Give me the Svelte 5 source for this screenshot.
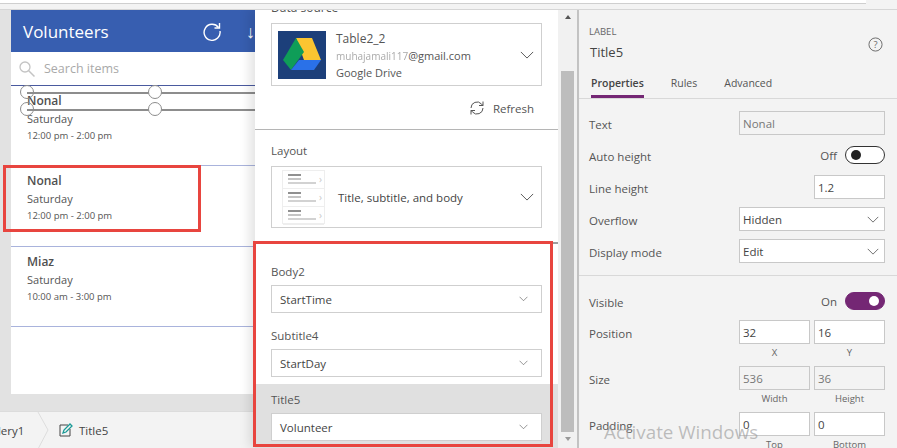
<script>
  const items = [
    { title: 'Nonal', day: 'Saturday', time: '12:00 pm - 2:00 pm' },
    { title: 'Nonal', day: 'Saturday', time: '12:00 pm - 2:00 pm' },
    { title: 'Miaz', day: 'Saturday', time: '10:00 am - 3:00 pm' }
  ];
  const fields = [
    { label: 'Body2', value: 'StartTime' },
    { label: 'Subtitle4', value: 'StartDay' },
    { label: 'Title5', value: 'Volunteer', active: true }
  ];
</script>

{#snippet chevron(w)}
  <svg class="chev" width={w} height={w / 2 + 1} viewBox="0 0 16 9"><path d="M1 1l7 7 7-7" fill="none" stroke="#555" stroke-width="1.1"/></svg>
{/snippet}

<div class="screen">
  <div class="topbar"><div class="topbar-box"></div></div>
  <div class="main">
    <div class="left">
      <div class="canvas">
        <div class="app">
          <div class="app-header">
            <span class="app-title">Volunteers</span>
            <svg class="reload" width="20" height="20" viewBox="0 0 20 20"><path d="M16.5 6.5A8 8 0 1 0 18 10" fill="none" stroke="#fff" stroke-width="1.4"/><path d="M17.5 2v5h-5" fill="none" stroke="#fff" stroke-width="1.4"/></svg>
            <span class="sort">↓</span>
          </div>
          <div class="search">
            <svg width="18" height="18" viewBox="0 0 18 18"><circle cx="7" cy="7" r="5" fill="none" stroke="#c4c4c4" stroke-width="1.3"/><path d="M10.5 10.5l6 6" stroke="#c4c4c4" stroke-width="1.5"/></svg>
            <span>Search items</span>
          </div>
          <div class="gallery">
            {#each items as item}
              <div class="item">
                <div class="item-title">{item.title}</div>
                <div class="item-day">{item.day}</div>
                <div class="item-time">{item.time}</div>
              </div>
            {/each}
          </div>
          <div class="selector">
            <i class="rail r1"></i><i class="rail r2"></i>
            <i class="knob k1"></i><i class="knob k2"></i><i class="knob k3"></i><i class="knob k4"></i>
          </div>
          <div class="redbox small"></div>
        </div>
      </div>
      <div class="crumbs">
        <span class="crumb-a">llery1</span>
        <svg class="sep" width="12" height="37" viewBox="0 0 12 37"><path d="M1 0l10 18L1 37" fill="none" stroke="#ddd"/></svg>
        <svg class="pen" width="14" height="14" viewBox="0 0 14 14"><path d="M9 2H1v11h10V6" fill="none" stroke="#444"/><path d="M4 10l1-3 6-6 2 2-6 6z" fill="none" stroke="#1a9a96" stroke-width="1.3"/></svg>
        <span class="crumb-b">Title5</span>
      </div>
    </div>

    <div class="mid">
      <div class="mid-body">
        <div class="source-section">
          <div class="cut-label"><span>Data source</span></div>
          <div class="box source">
            <svg class="drive" width="48" height="48" viewBox="0 0 48 48">
              <rect width="48" height="48" fill="#1c3f7a"/>
              <path d="M18 7h16l9 22H26z" fill="#fbc531"/>
              <path d="M18 7l8 14-13 18-8-10z" fill="#0f9d58"/>
              <path d="M21 29h22l-7 10H13z" fill="#2a71e8"/>
            </svg>
            <div class="source-text">
              <div class="s-name">Table2_2</div>
              <div class="s-mail"><span class="blurred">muhajamali117</span>@gmail.com</div>
              <div class="s-kind">Google Drive</div>
            </div>
            {@render chevron(14)}
          </div>
          <div class="refresh">
            <svg width="16" height="16" viewBox="0 0 16 16"><path d="M2 8a6 6 0 0 1 10.5-4L14 5.500M14 8a6 6 0 0 1-10.500 4L2 10.500" fill="none" stroke="#555"/><path d="M14 1.500v4h-4M2 14.500v-4h4" fill="none" stroke="#555"/></svg>
            <span>Refresh</span>
          </div>
        </div>
        <div class="layout-section">
          <div class="f-label">Layout</div>
          <div class="box layout">
            <div class="thumb">
              {#each [0, 1, 2] as _}
                <div class="thumb-row"><div class="tl"><i class="t1"></i><i class="t2"></i><i class="t3"></i></div><b>›</b></div>
              {/each}
            </div>
            <span class="layout-name">Title, subtitle, and body</span>
            {@render chevron(14)}
          </div>
        </div>
        <div class="fields">
          {#each fields as f}
            <div class="field" class:active={f.active}>
              <div class="f-label">{f.label}</div>
              <div class="select-box"><span>{f.value}</span>{@render chevron(9)}</div>
            </div>
          {/each}
        </div>
        <div class="redbox big"></div>
      </div>
      <div class="scrollbar">
        <div class="arrow up"></div>
        <div class="track"><div class="thumb-bar"></div></div>
        <div class="arrow down"></div>
      </div>
    </div>

    <div class="right">
      <div class="head">
        <div>
          <div class="kind">LABEL</div>
          <div class="ctl-name">Title5</div>
        </div>
        <svg class="help" width="15" height="15" viewBox="0 0 16 16"><circle cx="8" cy="8" r="7" fill="none" stroke="#666"/><text x="8" y="11.500" text-anchor="middle" font-size="10" fill="#666" font-family="Open Sans">?</text></svg>
      </div>
      <div class="tabs">
        <span class="tab on">Properties</span><span class="tab">Rules</span><span class="tab">Advanced</span>
      </div>
      <div class="group g1">
        <div class="row"><label>Text</label><div class="inp wide off">Nonal</div></div>
        <div class="row"><label>Auto height</label><div class="toggle-wrap"><span>Off</span><span class="toggle"></span></div></div>
        <div class="row"><label>Line height</label><div class="inp">1.2</div></div>
        <div class="row"><label>Overflow</label><div class="inp wide"><span>Hidden</span>{@render chevron(12)}</div></div>
        <div class="row"><label>Display mode</label><div class="inp wide"><span>Edit</span>{@render chevron(12)}</div></div>
      </div>
      <div class="group g2">
        <div class="row vis"><label>Visible</label><div class="toggle-wrap"><span>On</span><span class="toggle onn"></span></div></div>
        <div class="pair"><label>Position</label>
          <div class="cell"><div class="inp">32</div><small>X</small></div>
          <div class="cell"><div class="inp">16</div><small>Y</small></div>
        </div>
        <div class="pair"><label>Size</label>
          <div class="cell"><div class="inp off">536</div><small>Width</small></div>
          <div class="cell"><div class="inp off">36</div><small>Height</small></div>
        </div>
        <div class="pair"><label>Padding</label>
          <div class="cell"><div class="inp">0</div><small>Top</small></div>
          <div class="cell"><div class="inp">0</div><small>Bottom</small></div>
        </div>
      </div>
      <div class="activate">Activate Windows</div>
    </div>
  </div>
</div>

<style>
  :global(body) { margin: 0; }
  .screen {
    position: relative;
    width: 897px;
    height: 448px;
    overflow: hidden;
    display: flex;
    flex-direction: column;
    font-family: "Open Sans", "Noto Sans", sans-serif;
    color: #444;
    background: #f3f3f3;
  }
  .topbar {
    height: 10px;
    flex-shrink: 0;
    box-sizing: border-box;
    border-bottom: 1px solid #d6d6d6;
    background: #f3f3f3;
    position: relative;
    z-index: 4;
    margin-bottom: -1px;
  }
  .topbar-box {
    height: 3px;
    width: 866px;
    background: #fff;
    border-bottom: 1px solid #cfcfcf;
  }
  .main { flex: 1; display: flex; min-height: 0; }

  .left { width: 255px; flex-shrink: 0; display: flex; flex-direction: column; }
  .canvas {
    flex: 1;
    background: #e2e2e2;
    padding: 1px 0 17px 11px;
    min-height: 0;
    display: flex;
  }
  .app { flex: 1; background: #fff; position: relative; display: flex; flex-direction: column; }
  .app-header {
    height: 42px;
    background: #375eb0;
    color: #fff;
    display: flex;
    align-items: center;
    padding-left: 12px;
    flex-shrink: 0;
    overflow: hidden;
  }
  .app-title { font-size: 17px; width: 179px; }
  .sort { margin-left: 24px; font-size: 18px; }
  .search {
    height: 33px;
    display: flex;
    align-items: center;
    padding: 2px 0 0 7px;
    box-sizing: content-box;
    margin-top: -2px;
    gap: 8px;
    font-size: 12.5px;
    color: #a9a9a9;
    border-bottom: 1px solid #4a5a9f;
    flex-shrink: 0;
  }
  .item {
    height: 80px;
    box-sizing: border-box;
    padding: 6px 0 0 16px;
    border-bottom: 1px solid #a9b3dc;
    font-size: 10.5px;
    line-height: 17px;
  }
  .item:nth-child(2) { height: 81px; }
  .item-title { font-size: 12px; font-weight: 600; color: #505050; height: 18px; }
  .item-day { font-size: 11px; color: #555; }
  .item-time { font-size: 9.5px; color: #555; }
  .selector { position: absolute; left: 5px; top: 75px; width: 240px; height: 28px; }
  .rail { position: absolute; left: 11px; right: 0; height: 2px; background: #8d8d8d; }
  .r1 { top: 7px; }
  .r2 { top: 24px; }
  .knob {
    position: absolute;
    width: 12px;
    height: 12px;
    border: 1.5px solid #8d8d8d;
    border-radius: 50%;
    background: #fff;
  }
  .k1 { left: 4px; top: 0; background: transparent; }
  .k2 { left: 4px; top: 17px; background: transparent; }
  .k3 { left: 132px; top: 0; }
  .k4 { left: 132px; top: 17px; }
  .redbox { position: absolute; border: 3px solid #e8453f; box-sizing: border-box; z-index: 3; }
  .small { left: -8px; top: 155px; width: 198px; height: 67px; }

  .crumbs {
    height: 37px;
    flex-shrink: 0;
    display: flex;
    align-items: center;
    background: #f3f3f3;
    font-size: 11.5px;
    border-top: 1px solid #dcdcdc;
    box-sizing: border-box;
    overflow: hidden;
  }
  .crumb-a { margin-left: -5px; width: 42px; flex-shrink: 0; }
  .sep { margin-right: 10px; flex-shrink: 0; }
  .pen { margin-right: 6px; flex-shrink: 0; }

  .mid {
    width: 322px;
    flex-shrink: 0;
    display: flex;
    background: #fff;
    box-shadow: -6px 0 10px rgba(0, 0, 0, 0.1);
    z-index: 2;
  }
  .mid-body { position: relative; width: 303px; flex-shrink: 0; display: flex; flex-direction: column; }
  .source-section { height: 121px; box-sizing: border-box; border-bottom: 1px solid #b5b5b5; padding: 0 16px; flex-shrink: 0; }
  .cut-label { height: 14px; font-size: 12px; color: #555; overflow: hidden; }
  .cut-label span { display: block; margin-top: -9px; line-height: 16px; }
  .box { border: 1px solid #cfcfcf; box-sizing: border-box; display: flex; align-items: center; width: 271px; }
  .source { height: 63px; padding: 0 7px 0 6px; }
  .drive { margin-right: 10px; flex-shrink: 0; }
  .source-text { flex: 1; font-size: 11px; color: #555; padding-top: 2px; }
  .s-name { font-size: 12px; line-height: 16px; }
  .s-mail { line-height: 17px; }
  .blurred { color: #aaa; filter: blur(0.6px); font-size: 10px; }
  .s-kind { line-height: 16px; font-size: 11px; }
  .refresh { display: flex; justify-content: flex-end; align-items: center; gap: 8px; font-size: 11.5px; margin: 14px 8px 0 0; color: #555; }

  .layout-section { height: 114px; box-sizing: border-box; padding: 13px 16px 0; border-bottom: 2px solid #9e9e9e; flex-shrink: 0; }
  .f-label { font-size: 11.5px; color: #555; line-height: 16px; }
  .layout { height: 62px; margin-top: 7px; padding: 0 7px 0 10px; }
  .thumb { width: 43px; height: 54px; border: 1px solid #eee; box-sizing: border-box; margin-right: 13px; flex-shrink: 0; }
  .thumb-row { height: 16px; padding: 1px 2px 0 5px; display: flex; justify-content: space-between; border-bottom: 1px solid #eee; }
  .thumb-row b { color: #c8c8c8; font-weight: 400; font-size: 10px; line-height: 14px; }
  .tl { display: flex; flex-direction: column; gap: 2px; padding-top: 2px; }
  .tl i { display: block; height: 2px; }
  .t1 { width: 13px; background: #909090; }
  .t2 { width: 13px; background: #c4c4c4; }
  .t3 { width: 28px; background: #d2d2d2; }
  .layout-name { flex: 1; font-size: 11.5px; color: #444; white-space: nowrap; }

  .fields { flex: 1; display: flex; flex-direction: column; padding-top: 20px; min-height: 0; }
  .field { padding: 0 16px; height: 64px; box-sizing: border-box; flex-shrink: 0; }
  .field.active { background: #e0e0e0; height: 64px; padding-top: 8px; margin-top: -8px; }
  .select-box {
    width: 271px;
    height: 28px;
    box-sizing: border-box;
    margin-top: 5px;
    border: 1px solid #cfcfcf;
    background: #fff;
    display: flex;
    align-items: center;
    justify-content: space-between;
    padding: 0 13px 0 8px;
    font-size: 11.5px;
    color: #444;
  }
  .big { left: -2px; top: 232px; width: 300px; height: 206px; }

  .scrollbar { width: 19px; background: #f1f1f1; display: flex; flex-direction: column; align-items: center; }
  .track { flex: 1; width: 13px; display: flex; flex-direction: column; justify-content: flex-end; padding-top: 52px; box-sizing: border-box; min-height: 0; }
  .thumb-bar { flex: 1; background: #bdbdbd; }
  .arrow { width: 0; height: 0; border-left: 3.5px solid transparent; border-right: 3.5px solid transparent; flex-shrink: 0; }
  .up { border-bottom: 4px solid #555; margin: 6px 0 0; }
  .down { border-top: 4px solid #999; margin: 5px 0 7px; }

  .right {
    flex: 1;
    position: relative;
    background: #f3f3f3;
    border-left: 2px solid #c4c4c4;
    box-sizing: border-box;
    display: flex;
    flex-direction: column;
    font-size: 11.5px;
    color: #555;
    padding-top: 14px;
    z-index: 1;
  }
  label { width: 150px; flex-shrink: 0; padding-top: 2px; }
  .head { display: flex; justify-content: space-between; align-items: center; padding: 0 14px 0 10px; height: 45px; flex-shrink: 0; }
  .kind { font-size: 9.5px; color: #666; line-height: 13px; }
  .ctl-name { font-size: 13px; color: #444; line-height: 28px; margin-left: 1px; }
  .help { margin-bottom: 2px; }
  .tabs { display: flex; gap: 27px; height: 29px; box-sizing: border-box; padding: 6px 0 0 12px; border-bottom: 1px solid #d8d8d8; font-size: 10.5px; margin-top: 2px; flex-shrink: 0; }
  .tab { height: 22px; box-sizing: border-box; color: #555; }
  .tab.on { font-weight: 600; color: #444; border-bottom: 3px solid #742774; }

  .group { padding: 0 12px 0 10px; flex-shrink: 0; }
  .g1 { height: 177px; box-sizing: border-box; padding-top: 12px; border-bottom: 1px solid #d8d8d8; display: flex; flex-direction: column; gap: 8px; }
  .row { display: flex; justify-content: space-between; align-items: center; height: 24px; flex-shrink: 0; }
  .inp {
    width: 71px;
    height: 24px;
    box-sizing: border-box;
    border: 1px solid #c8c8c8;
    background: #fff;
    color: #444;
    display: flex;
    align-items: center;
    justify-content: space-between;
    padding: 0 3px;
    font-size: 11.5px;
  }
  .wide { width: 146px; padding-right: 5px; }
  .off { background: #f3f3f3; color: #777; }
  .toggle-wrap { display: flex; align-items: center; gap: 8px; }
  .toggle { width: 40px; height: 18px; border: 1px solid #333; border-radius: 9px; box-sizing: border-box; position: relative; background: #fff; }
  .toggle::after { content: ""; position: absolute; left: 5px; top: 3px; width: 10px; height: 10px; border-radius: 50%; background: #222; }
  .toggle.onn { background: #742774; border-color: #742774; }
  .toggle.onn::after { left: auto; right: 5px; background: #fff; }
  .g2 { padding-top: 13px; display: flex; flex-direction: column; }
  .vis { margin-bottom: 7px; }
  .pair { display: flex; height: 46px; flex-shrink: 0; }
  .pair label { line-height: 27px; padding-top: 0; }
  .cell { width: 71px; margin-right: 4px; text-align: center; }
  .cell:last-child { margin-right: 0; }
  small { display: block; font-size: 9.5px; line-height: 18px; color: #666; }
  .activate {
    position: absolute;
    left: 25px;
    top: 410px;
    font-size: 18.8px;
    color: rgba(150, 150, 150, 0.6);
    white-space: nowrap;
  }
</style>
